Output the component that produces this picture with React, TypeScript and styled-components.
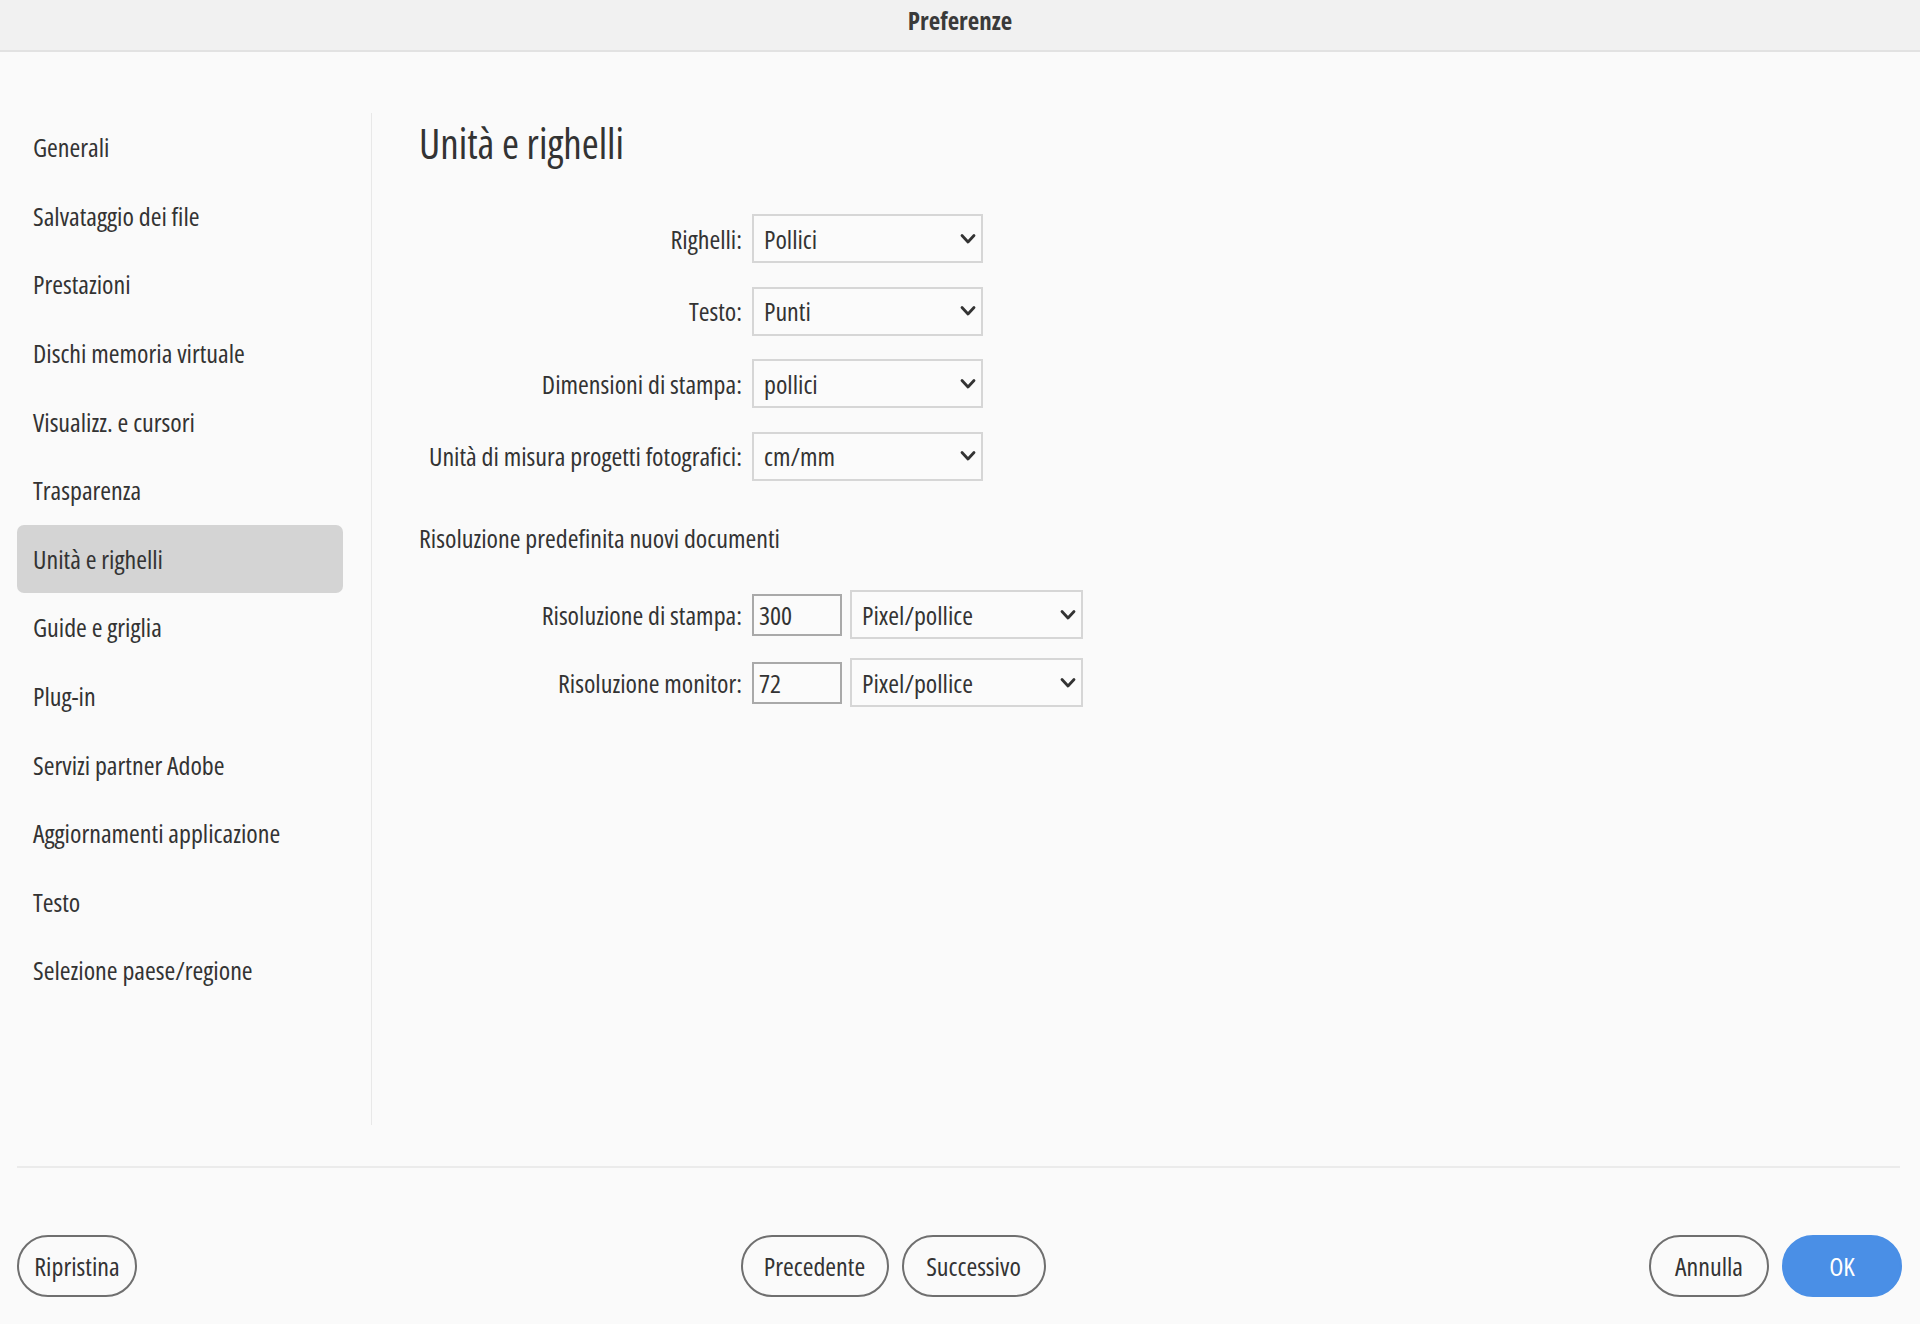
import React from 'react'
import styled, { createGlobalStyle } from 'styled-components'

const GlobalStyle = createGlobalStyle`
  html, body {
    margin: 0;
    padding: 0;
    background: #fafafa;
  }
  body {
    font-family: "Open Sans", "Noto Sans", sans-serif;
    font-stretch: 75%;
    color: #333333;
  }
  * { box-sizing: border-box; }
`

const sections = [
  'Generali',
  'Salvataggio dei file',
  'Prestazioni',
  'Dischi memoria virtuale',
  'Visualizz. e cursori',
  'Trasparenza',
  'Unità e righelli',
  'Guide e griglia',
  'Plug-in',
  'Servizi partner Adobe',
  'Aggiornamenti applicazione',
  'Testo',
  'Selezione paese/regione',
]

const unitRows = [
  { label: 'Righelli:', value: 'Pollici' },
  { label: 'Testo:', value: 'Punti' },
  { label: 'Dimensioni di stampa:', value: 'pollici' },
  { label: 'Unità di misura progetti fotografici:', value: 'cm/mm' },
]

const resolutionRows = [
  { label: 'Risoluzione di stampa:', amount: '300', unit: 'Pixel/pollice' },
  { label: 'Risoluzione monitor:', amount: '72', unit: 'Pixel/pollice' },
]

const Chevron = () => (
  <svg width="18" height="12" viewBox="0 0 18 12" fill="none">
    <polyline
      points="3,2.5 9,9 15,2.5"
      stroke="#333"
      strokeWidth="2.8"
      strokeLinecap="round"
      strokeLinejoin="round"
    />
  </svg>
)

const Dropdown = ({ value, width }: { value: string; width: number }) => (
  <SelectBox $w={width}>
    <span>{value}</span>
    <Chevron />
  </SelectBox>
)

const App = () => {
  return (
    <Window>
      <GlobalStyle />
      <TitleBar>Preferenze</TitleBar>
      <Body>
        <Sidebar>
          {sections.map((s) => (
            <NavItem key={s} $active={s === 'Unità e righelli'}>
              {s}
            </NavItem>
          ))}
        </Sidebar>
        <Content>
          <Heading>Unità e righelli</Heading>
          <FormGrid $top={47}>
            {unitRows.map((r) => (
              <Row key={r.label} $h={49}>
                <Label>{r.label}</Label>
                <Dropdown value={r.value} width={231} />
              </Row>
            ))}
          </FormGrid>
          <SectionTitle>Risoluzione predefinita nuovi documenti</SectionTitle>
          <FormGrid $top={34} $gap={18}>
            {resolutionRows.map((r) => (
              <Row key={r.label} $h={50}>
                <Label>{r.label}</Label>
                <Controls>
                  <NumberField defaultValue={r.amount} />
                  <Dropdown value={r.unit} width={233} />
                </Controls>
              </Row>
            ))}
          </FormGrid>
        </Content>
      </Body>
      <Divider />
      <Footer>
        <ButtonGroup>
          <PillButton $w={120}>Ripristina</PillButton>
        </ButtonGroup>
        <ButtonGroup>
          <PillButton $w={148}>Precedente</PillButton>
          <PillButton $w={144}>Successivo</PillButton>
        </ButtonGroup>
        <ButtonGroup>
          <PillButton $w={120}>Annulla</PillButton>
          <PillButton $w={120} $primary>
            OK
          </PillButton>
        </ButtonGroup>
      </Footer>
    </Window>
  )
}

export default App

const Window = styled.div`
  width: 1920px;
  height: 1324px;
  display: flex;
  flex-direction: column;
  background: #fafafa;
`

const TitleBar = styled.div`
  height: 52px;
  flex-shrink: 0;
  background: #f1f1f1;
  border-bottom: 2px solid #e2e2e2;
  display: flex;
  align-items: center;
  justify-content: center;
  font-size: 25px;
  font-weight: 700;
  color: #3a3a3a;
  padding-bottom: 10px;
`

const Body = styled.div`
  flex: 1;
  display: flex;
  padding: 61px 0 41px;
`

const Sidebar = styled.nav`
  width: 372px;
  flex-shrink: 0;
  border-right: 1.5px solid #e8e8e8;
  padding: 0 0 0 17px;
  display: flex;
  flex-direction: column;
`

const NavItem = styled.div<{ $active?: boolean }>`
  width: 326px;
  height: 68.6px;
  display: flex;
  align-items: center;
  padding-left: 16px;
  font-size: 26px;
  color: #333;
  border-radius: 7px;
  background: ${({ $active }) => ($active ? '#d4d4d4' : 'transparent')};
`

const Content = styled.section`
  flex: 1;
  padding-left: 47px;
  display: flex;
  flex-direction: column;
`

const Heading = styled.h1`
  margin: 6px 0 0;
  font-size: 41px;
  font-weight: 400;
  line-height: 48px;
  color: #333;
`

const FormGrid = styled.div<{ $top: number; $gap?: number }>`
  display: flex;
  flex-direction: column;
  gap: ${({ $gap }) => $gap ?? 23.5}px;
  margin-top: ${({ $top }) => $top}px;
`

const Row = styled.div<{ $h: number }>`
  display: grid;
  grid-template-columns: 323px auto;
  column-gap: 10px;
  align-items: center;
  height: ${({ $h }) => $h}px;
`

const Label = styled.span`
  justify-self: end;
  font-size: 26px;
  color: #333;
  white-space: nowrap;
`

const Controls = styled.div`
  display: flex;
  align-items: center;
  gap: 8px;
`

const SelectBox = styled.div<{ $w: number }>`
  width: ${({ $w }) => $w}px;
  height: 49px;
  border: 2px solid #d6d6d6;
  background: #fbfbfb;
  display: flex;
  align-items: center;
  justify-content: space-between;
  padding: 0 4px 0 10px;
  font-size: 26px;
  color: #333;
`

const NumberField = styled.input`
  width: 90px;
  height: 42px;
  border: 2px solid #a9a9a9;
  background: #fbfbfb;
  padding: 0 5px;
  font-family: inherit;
  font-stretch: 75%;
  font-size: 26px;
  color: #333;
  outline: none;
`

const SectionTitle = styled.div`
  margin-top: 39px;
  font-size: 26px;
  line-height: 36px;
  color: #333;
`

const Divider = styled.hr`
  margin: 0 20px 0 17px;
  border: none;
  height: 2px;
  background: #ebebeb;
  flex-shrink: 0;
`

const Footer = styled.footer`
  height: 156px;
  flex-shrink: 0;
  display: flex;
  justify-content: space-between;
  align-items: flex-start;
  padding: 67px 18px 0 17px;
`

const ButtonGroup = styled.div`
  display: flex;
  gap: 13px;
`

const PillButton = styled.button<{ $w: number; $primary?: boolean }>`
  width: ${({ $w }) => $w}px;
  height: 62px;
  border-radius: 31px;
  border: 2px solid ${({ $primary }) => ($primary ? '#4a8fe6' : '#6f6f6f')};
  background: ${({ $primary }) => ($primary ? '#4a8fe6' : 'transparent')};
  color: ${({ $primary }) => ($primary ? '#ffffff' : '#333333')};
  font-family: inherit;
  font-stretch: 75%;
  font-size: 26px;
  padding: 0;
  cursor: pointer;
`
